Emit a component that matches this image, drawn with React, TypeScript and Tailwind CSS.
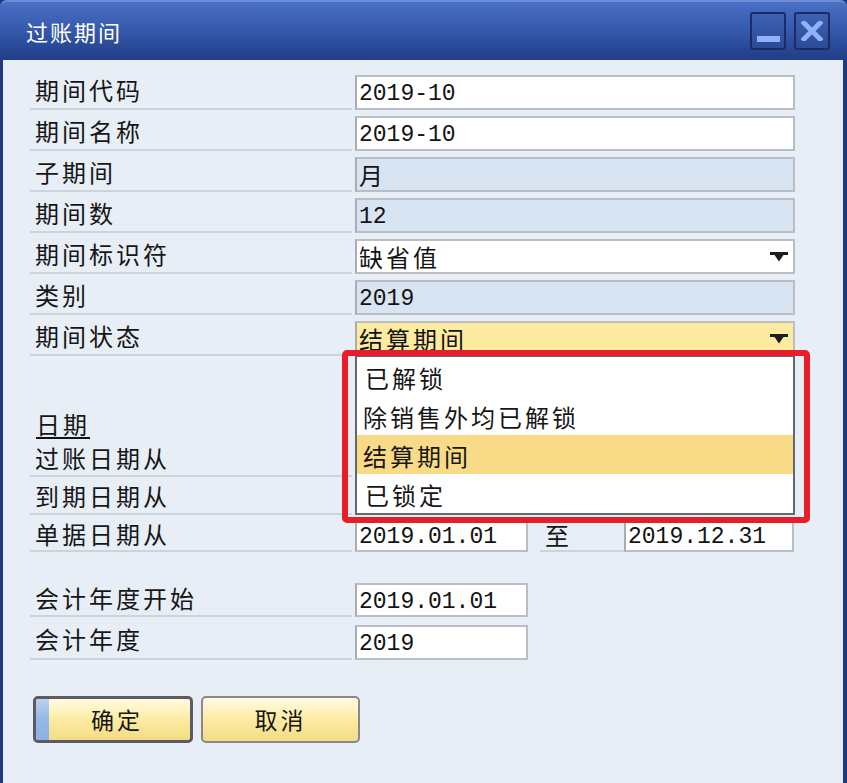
import React from 'react';

const cjk = "font-['Noto_Sans_CJK_SC','Noto_Sans',sans-serif]";
const val = "font-['Liberation_Mono','Noto_Sans_CJK_SC',monospace]";

type FieldKind = 'edit' | 'readonly' | 'combo' | 'active';

function Arrow() {
  return (
    <svg width="18" height="10" viewBox="0 0 18 10" className="absolute right-[5px] top-1/2 -translate-y-1/2">
      <path d="M0 0H18V3H13.5L9 9.5L4.5 3H0Z" fill="#1e1e1e" />
    </svg>
  );
}

function Field({ value, kind = 'edit', w = 'w-[440px]', h = 'h-[35px]' }: { value?: string; kind?: FieldKind; w?: string; h?: string }) {
  const bg = kind === 'readonly' ? 'bg-[#d9e4f2]' : kind === 'active' ? 'bg-[#fdeb9f]' : 'bg-white';
  const mono = value && /^[0-9.\-]+$/.test(value);
  return (
    <div className={`relative flex-none ${w} ${h} ${bg} border-2 border-[#b9bec6] border-l-[#a8adb5] flex items-center pl-[2px] text-[#141414] ${mono ? `${val} text-[23px] pt-[4px]` : `${cjk} text-[24px] tracking-[3px] pt-[1px]`}`}>
      <span className="leading-none">{value}</span>
      {(kind === 'combo' || kind === 'active') && <Arrow />}
    </div>
  );
}

function Row({ label, children, h = 'h-[41px]' }: { label: string; children?: React.ReactNode; h?: string }) {
  return (
    <div className={`flex items-end ${h}`}>
      <div className={`flex-none w-[322px] h-full flex items-center border-b-2 border-[#cdd3dc] pl-[5px] pt-[2px] ${cjk} text-[24px] tracking-[3px] text-[#161616]`}>
        {label}
      </div>
      <div className="ml-[3px] flex items-end">{children}</div>
    </div>
  );
}

export default function App() {
  const options = ['已解锁', '除销售外均已解锁', '结算期间', '已锁定'];

  return (
    <div className="relative w-[847px] h-[783px] overflow-hidden bg-[#1f3a7c]">
      {/* title bar */}
      <div className="h-[60px] rounded-t-[7px] border-t-2 border-[#6e8fd8] bg-gradient-to-b from-[#4a70c5] via-[#3558aa] to-[#203d86] flex items-center pl-[26px] pr-[17px]">
        <span className={`${cjk} text-[22px] tracking-[2px] text-white`}>过账期间</span>
        <div className="ml-auto flex gap-[8px]">
          <div className="w-[36px] h-[38px] rounded-[3px] border-2 border-[#1a2c66] bg-gradient-to-b from-[#3f62b4] to-[#2c4a96] flex items-end justify-center pb-[6px]">
            <div className="w-[23px] h-[6px] bg-[#8fb2fa]" />
          </div>
          <div className="w-[36px] h-[38px] rounded-[3px] border-2 border-[#1a2c66] bg-gradient-to-b from-[#3f62b4] to-[#2c4a96] flex items-center justify-center">
            <svg width="22" height="20" viewBox="0 0 22 20">
              <path d="M3 2L19 18M19 2L3 18" stroke="#8fb2fa" strokeWidth="5" strokeLinecap="square" />
            </svg>
          </div>
        </div>
      </div>

      {/* body */}
      <div className="absolute left-[3px] right-[4px] top-[60px] bottom-0 bg-[#e8eef6] pl-[27px] pt-[9px]">
        <Row label="期间代码"><Field value="2019-10" /></Row>
        <Row label="期间名称"><Field value="2019-10" /></Row>
        <Row label="子期间"><Field value="月" kind="readonly" /></Row>
        <Row label="期间数"><Field value="12" kind="readonly" /></Row>
        <Row label="期间标识符"><Field value="缺省值" kind="combo" /></Row>
        <Row label="类别"><Field value="2019" kind="readonly" /></Row>
        <Row label="期间状态"><Field value="结算期间" kind="active" /></Row>

        <div className="mt-[55px] h-[28px] flex items-end">
          <span className={`ml-[6px] border-b-2 border-[#111] leading-[26px] ${cjk} text-[24px] tracking-[3px] text-[#161616]`}>日期</span>
        </div>
        <Row label="过账日期从" h="h-[38px]">
          <Field w="w-[173px]" h="h-[34px]" />
        </Row>
        <Row label="到期日期从" h="h-[38px]">
          <Field w="w-[173px]" h="h-[34px]" />
        </Row>
        <Row label="单据日期从" h="h-[37px]">
          <Field value="2019.01.01" w="w-[173px]" h="h-[34px]" />
          <div className={`ml-[12px] w-[84px] h-[34px] flex items-center border-b-2 border-[#cdd3dc] pl-[5px] pt-[2px] ${cjk} text-[24px] text-[#161616]`}>至</div>
          <Field value="2019.12.31" w="w-[170px]" h="h-[34px]" />
        </Row>

        <div className="mt-[27px]">
          <Row label="会计年度开始" h="h-[38px]">
            <Field value="2019.01.01" w="w-[173px]" h="h-[34px]" />
          </Row>
          <Row label="会计年度" h="h-[43px]">
            <Field value="2019" w="w-[173px]" h="h-[35px]" />
          </Row>
        </div>

        <div className="mt-[36px] ml-[3px] flex gap-[8px]">
          <button className="relative w-[160px] h-[47px] rounded-[5px] border-[3px] border-[#5b5c63] overflow-hidden bg-gradient-to-b from-[#fffbe2] via-[#fdeba2] to-[#f3dc84] flex items-center justify-center">
            <span className="absolute left-0 top-0 bottom-0 w-[13px] bg-gradient-to-b from-[#b9d1f2] via-[#94b8e8] to-[#8eb0e0]" />
            <span className={`${cjk} text-[23px] tracking-[3px] text-[#161616] pl-[8px]`}>确定</span>
          </button>
          <button className="w-[159px] h-[47px] rounded-[5px] border-2 border-[#88888c] bg-gradient-to-b from-[#fffbe2] via-[#fdeba2] to-[#f3dc84] flex items-center justify-center">
            <span className={`${cjk} text-[23px] tracking-[3px] text-[#161616]`}>取消</span>
          </button>
        </div>
      </div>

      {/* open dropdown list */}
      <div className="absolute left-[355px] top-[355px] w-[440px] h-[160px] bg-white border-2 border-[#66676c] flex flex-col">
        {options.map((o, i) => (
          <div
            key={o}
            className={`h-[39px] flex items-center pt-[2px] ${i === 1 || i === 2 ? 'pl-[6px]' : 'pl-[8px]'} ${i === 2 ? 'bg-[#f9db87]' : ''} ${cjk} text-[24px] tracking-[3px] text-[#161616]`}
          >
            {o}
          </div>
        ))}
      </div>

      {/* red highlight frame */}
      <div className="absolute left-[342px] top-[350px] w-[468px] h-[173px] border-[6px] border-[#e81d2a] rounded-[5px] pointer-events-none" />
    </div>
  );
}
